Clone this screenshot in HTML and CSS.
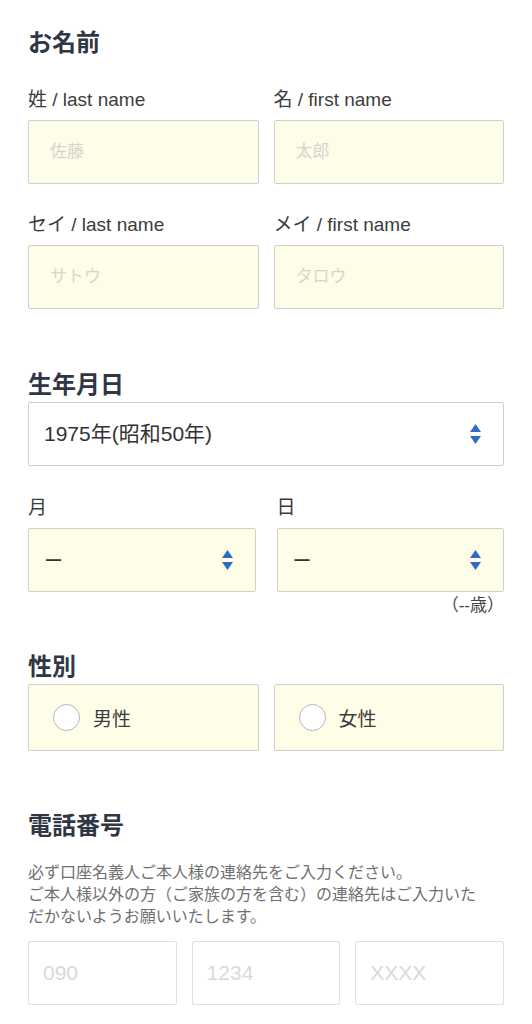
FILE: index.html
```html
<!DOCTYPE html>
<html lang="ja">
<head>
<meta charset="utf-8">
<title>お客様情報</title>
<link rel="stylesheet" href="styles.css">
</head>
<body>
<main class="form">
  <section class="sec sec-name">
    <h2 class="heading">お名前</h2>
    <div class="grid2">
      <div class="field">
        <label class="label">姓 / last name</label>
        <input class="input yellow pad-lg" type="text" placeholder="佐藤">
      </div>
      <div class="field">
        <label class="label">名 / first name</label>
        <input class="input yellow pad-lg" type="text" placeholder="太郎">
      </div>
    </div>
    <div class="grid2 row2">
      <div class="field">
        <label class="label">セイ / last name</label>
        <input class="input yellow pad-lg" type="text" placeholder="サトウ">
      </div>
      <div class="field">
        <label class="label">メイ / first name</label>
        <input class="input yellow pad-lg" type="text" placeholder="タロウ">
      </div>
    </div>
  </section>

  <section class="sec sec-birth">
    <h2 class="heading tight">生年月日</h2>
    <div class="select white">
      <span class="sel-text">1975年(昭和50年)</span>
      <svg class="arrows" width="11" height="20" viewBox="0 0 11 20"><path d="M5.5 0 L11 8 H0 Z M0 12 H11 L5.5 20 Z" fill="#2f6cc5"/></svg>
    </div>
    <div class="grid2 wide-gap md">
      <div class="field">
        <label class="label">月</label>
        <div class="select yellow">
          <span class="sel-text dash">ー</span>
          <svg class="arrows" width="11" height="20" viewBox="0 0 11 20"><path d="M5.5 0 L11 8 H0 Z M0 12 H11 L5.5 20 Z" fill="#2f6cc5"/></svg>
        </div>
      </div>
      <div class="field">
        <label class="label">日</label>
        <div class="select yellow">
          <span class="sel-text dash">ー</span>
          <svg class="arrows" width="11" height="20" viewBox="0 0 11 20"><path d="M5.5 0 L11 8 H0 Z M0 12 H11 L5.5 20 Z" fill="#2f6cc5"/></svg>
        </div>
      </div>
    </div>
    <p class="age">（--歳）</p>
  </section>

  <section class="sec sec-gender">
    <h2 class="heading tight">性別</h2>
    <div class="grid2">
      <label class="radio-box">
        <span class="radio"></span>
        <span class="radio-text">男性</span>
      </label>
      <label class="radio-box">
        <span class="radio"></span>
        <span class="radio-text">女性</span>
      </label>
    </div>
  </section>

  <section class="sec sec-phone">
    <h2 class="heading">電話番号</h2>
    <p class="note">必ず口座名義人ご本人様の連絡先をご入力ください。<br>ご本人様以外の方（ご家族の方を含む）の連絡先はご入力いた<br>だかないようお願いいたします。</p>
    <div class="grid3">
      <input class="input phone" type="tel" placeholder="090">
      <input class="input phone" type="tel" placeholder="1234">
      <input class="input phone" type="tel" placeholder="XXXX">
    </div>
  </section>
</main>
</body>
</html>
```
FILE: styles.css
```css
* { box-sizing: border-box; }
html, body { margin: 0; padding: 0; background: #ffffff; }
body {
  font-family: "Liberation Sans", "Noto Sans CJK JP", sans-serif;
  color: #3a3a3a;
}
.form { padding: 0 28px; }
.sec { margin: 0; }
.heading {
  margin: 0;
  font-size: 24px;
  line-height: 28px;
  font-weight: 700;
  color: #2f3744;
  font-family: "Noto Sans CJK JP", sans-serif;
}
.sec-name { padding-top: 27px; }
.sec-name .heading { margin-bottom: 33px; }
.heading.tight { margin-bottom: 5px; }
.sec-birth { margin-top: 60px; }
.sec-gender { margin-top: 33px; }
.sec-phone { margin-top: 59px; }

.grid2 {
  display: grid;
  grid-template-columns: 1fr 1fr;
  column-gap: 15px;
}
.grid2.wide-gap { column-gap: 21px; }
.grid2.row2 { margin-top: 29px; }
.grid2.md { margin-top: 30px; }
.grid3 {
  display: grid;
  grid-template-columns: 1fr 1fr 1fr;
  column-gap: 15px;
  margin-top: 15px;
}
.field { display: flex; flex-direction: column; }
.label {
  display: block;
  font-size: 19px;
  line-height: 24px;
  color: #3c3c3c;
  margin-bottom: 8px;
}
.input {
  display: block;
  width: 100%;
  height: 64px;
  margin: 0;
  border: 1.5px solid #cfcfcb;
  border-radius: 2px;
  font-family: "Liberation Sans", "Noto Sans CJK JP", sans-serif;
  font-size: 17px;
  color: #333;
  outline: none;
}
.input.yellow { background: #fefde8; }
.pad-lg { padding: 0 0 0 21px; }
.input::placeholder { color: #d6d5cc; opacity: 1; }
.input.phone {
  background: #ffffff;
  border-color: #e0e0e0;
  padding: 0 0 0 14px;
  font-size: 21px;
}
.input.phone::placeholder { color: #d9d9d9; }

.select {
  display: flex;
  align-items: center;
  justify-content: space-between;
  height: 64px;
  padding: 0 22px 0 15px;
  border: 1.5px solid #cfcfcf;
  border-radius: 2px;
}
.select.white { background: #ffffff; }
.select.yellow { background: #fefde8; border-color: #cfcfcb; }
.sel-text {
  font-size: 21px;
  line-height: 28px;
  color: #333333;
}
.dash { font-family: "Noto Sans CJK JP", sans-serif; font-size: 19px; }
.arrows { display: block; flex: none; }

.age {
  margin: 2px 0 0;
  text-align: right;
  font-size: 17px;
  line-height: 24px;
  color: #444;
}

.radio-box {
  display: flex;
  align-items: center;
  height: 67px;
  padding-left: 24px;
  background: #fefde8;
  border: 1.5px solid #cfcfcb;
  border-radius: 2px;
}
.radio {
  display: block;
  width: 27px;
  height: 27px;
  border-radius: 50%;
  border: 1.5px solid #b5b5b5;
  background: #ffffff;
  flex: none;
}
.radio-text {
  margin-left: 13px;
  font-size: 19px;
  color: #3c3c3c;
}

.note {
  margin: 22px 0 0;
  font-size: 16px;
  line-height: 22px;
  color: #707070;
  font-family: "Noto Sans CJK JP", sans-serif;
  white-space: nowrap;
}
```
